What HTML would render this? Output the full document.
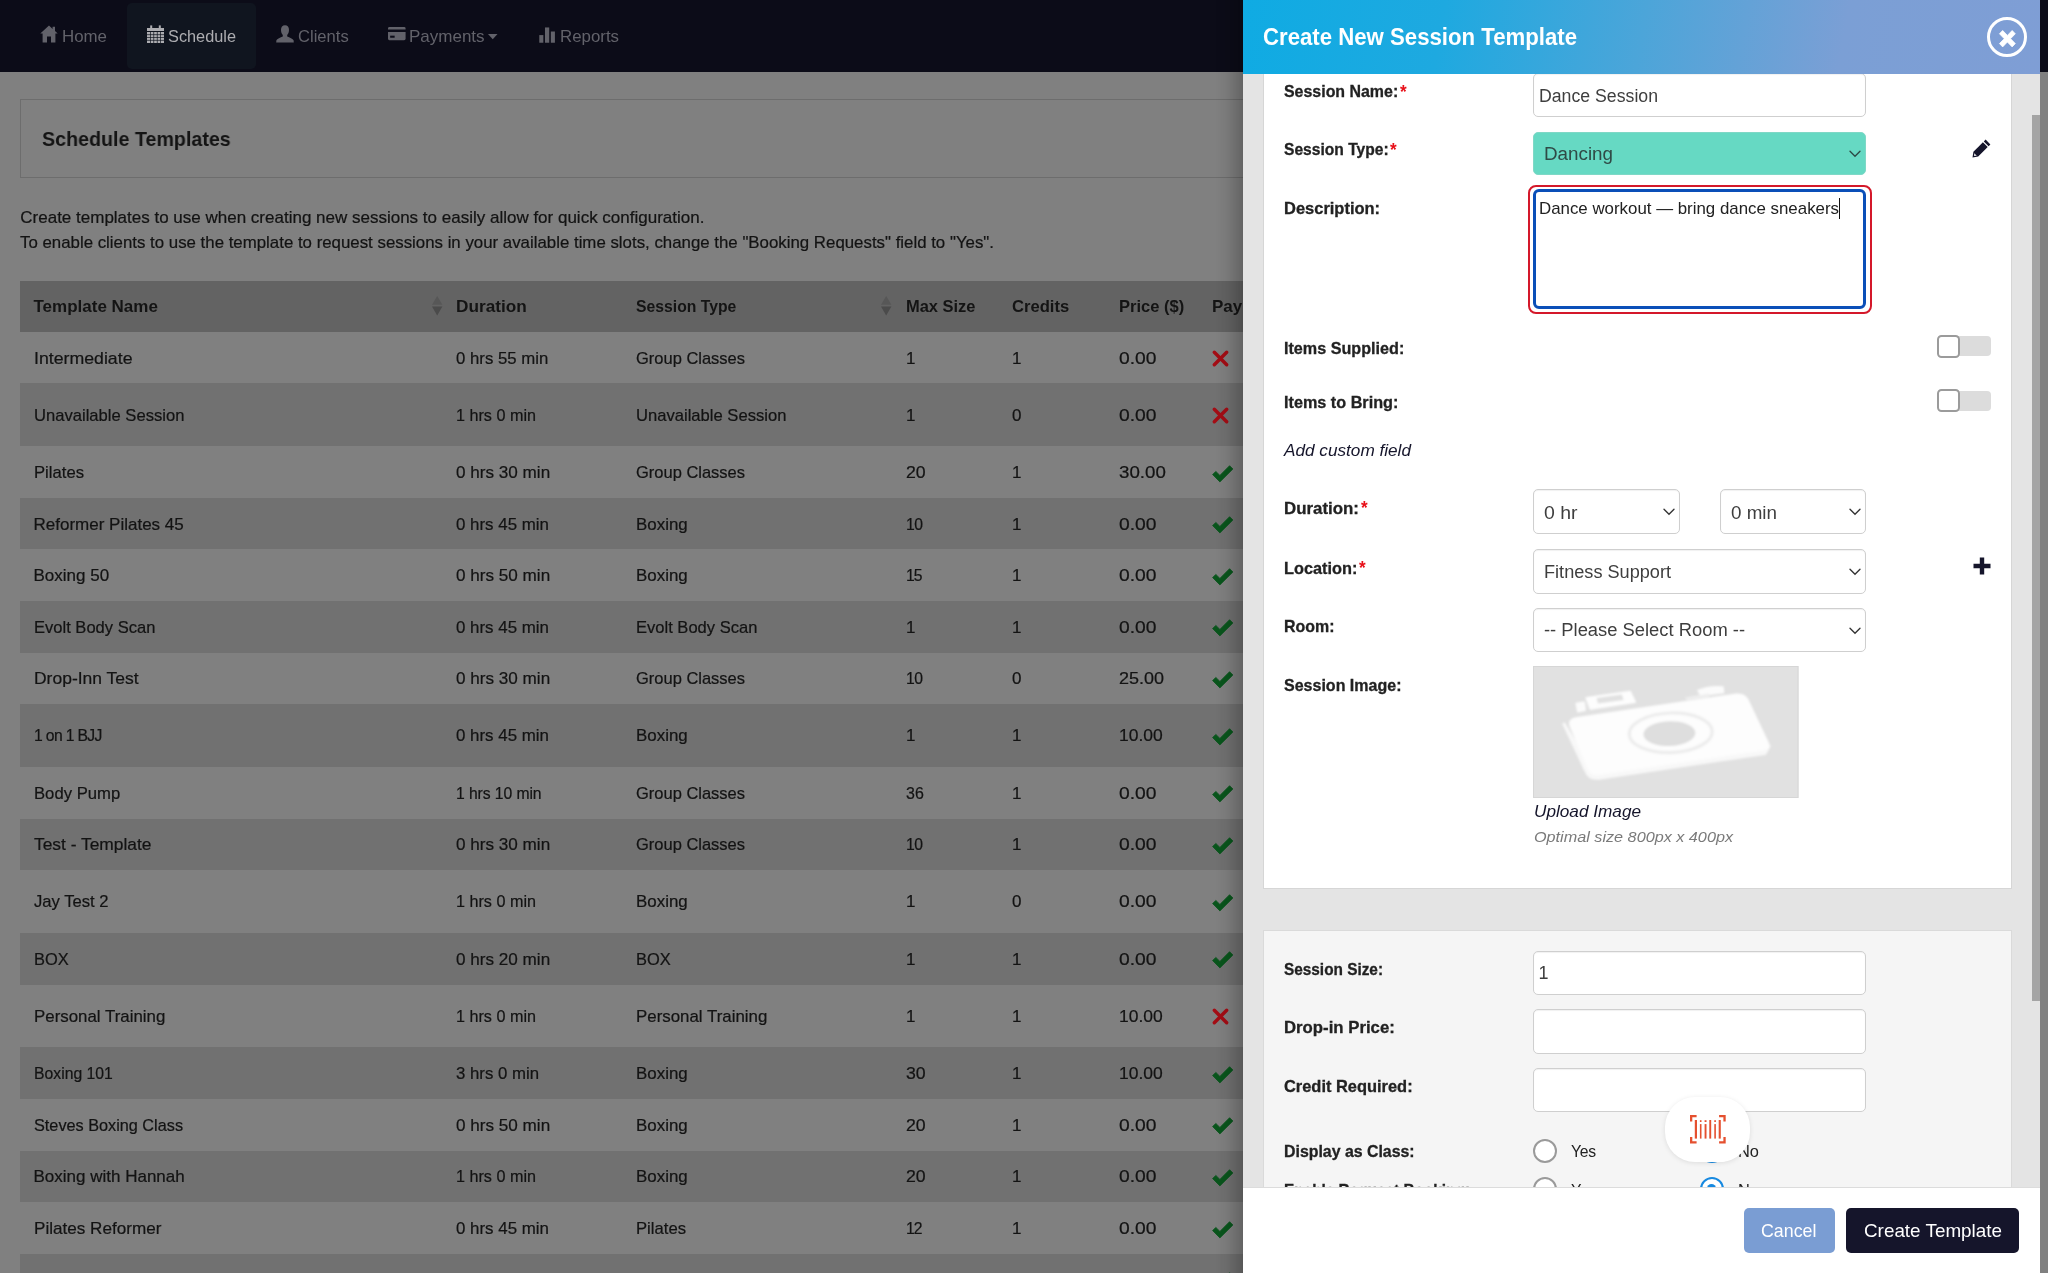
<!DOCTYPE html>
<html lang="en"><head><meta charset="utf-8"><title>Schedule Templates</title>
<style>
html,body{margin:0;padding:0;}
body{width:2048px;height:1273px;overflow:hidden;position:relative;background:#808080;font-family:'Liberation Sans',sans-serif;}
.t{position:absolute;white-space:pre;transform-origin:0 50%;}
svg{display:block;overflow:visible;}
</style></head><body>
<div id="clip" style="position:absolute;left:0;top:0;width:2048px;height:1273px;overflow:hidden;will-change:transform;">
<div style="position:absolute;left:0px;top:0px;width:2048px;height:71.5px;background:#0c0c18;"></div>
<div style="position:absolute;left:127px;top:3px;width:129px;height:65.5px;background:#10151f;border-radius:5px;"></div>
<svg style="position:absolute;left:40px;top:25px;" width="18" height="18" viewBox="0 0 18 18" preserveAspectRatio="none"><path fill="#62626a" d="M9 0.5 L0.3 8.6 L2.6 8.6 L2.6 17.5 L7 17.5 L7 11.5 L11 11.5 L11 17.5 L15.4 17.5 L15.4 8.6 L17.7 8.6 L15 6.1 L15 1.8 L12.6 1.8 L12.6 3.9 Z"/></svg>
<span class="t" style="left:61.5px;top:25.0px;font-size:17px;line-height:24px;color:#62626a;transform:scaleX(0.9921);">Home</span>
<svg style="position:absolute;left:146.5px;top:25px;" width="17" height="18" viewBox="0 0 17 18" preserveAspectRatio="none"><path fill="#adadb1" d="M0 3 H17 V6 H0 Z"/><rect x="3.2" y="0.4" width="2" height="3.4" fill="#adadb1"/><rect x="11.8" y="0.4" width="2" height="3.4" fill="#adadb1"/><rect x="0" y="7" width="17" height="11" fill="#adadb1"/><rect x="3.05" y="7" width="0.7" height="11" fill="#10151f"/><rect x="6.45" y="7" width="0.7" height="11" fill="#10151f"/><rect x="9.85" y="7" width="0.7" height="11" fill="#10151f"/><rect x="13.25" y="7" width="0.7" height="11" fill="#10151f"/><rect x="0" y="9.40" width="17" height="0.7" fill="#10151f"/><rect x="0" y="12.15" width="17" height="0.7" fill="#10151f"/><rect x="0" y="14.90" width="17" height="0.7" fill="#10151f"/></svg>
<span class="t" style="left:168.0px;top:25.0px;font-size:17px;line-height:24px;color:#adadb1;transform:scaleX(0.9592);">Schedule</span>
<svg style="position:absolute;left:276px;top:25px;" width="18" height="18" viewBox="0 0 18 18" preserveAspectRatio="none"><path fill="#62626a" d="M9 0.3 C11.6 0.3 13 2.2 13 5 C13 7.2 12.2 9 11.2 10 L11.2 11.4 C13.5 12.4 17 13.6 17.6 15.2 L17.8 17.6 L0.2 17.6 L0.4 15.2 C1 13.6 4.5 12.4 6.8 11.4 L6.8 10 C5.8 9 5 7.2 5 5 C5 2.2 6.4 0.3 9 0.3 Z"/></svg>
<span class="t" style="left:297.5px;top:25.0px;font-size:17px;line-height:24px;color:#62626a;transform:scaleX(0.9756);">Clients</span>
<svg style="position:absolute;left:388px;top:27.2px;" width="17.6" height="13.2" viewBox="0 0 18 14" preserveAspectRatio="none"><path fill="#62626a" d="M1.5 0 H16.5 Q18 0 18 1.5 V2.6 H0 V1.5 Q0 0 1.5 0 Z M0 5.4 H18 V12.5 Q18 14 16.5 14 H1.5 Q0 14 0 12.5 Z"/><rect x="2.2" y="9.2" width="4.6" height="2.2" fill="#0c0c18"/></svg>
<span class="t" style="left:409.0px;top:25.0px;font-size:17px;line-height:24px;color:#62626a;">Payments</span>
<svg style="position:absolute;left:488px;top:34.3px;" width="9.5" height="5.8" viewBox="0 0 10 6" preserveAspectRatio="none"><path fill="#62626a" d="M0 0 H10 L5 5.5 Z"/></svg>
<svg style="position:absolute;left:539.3px;top:27px;" width="16.4" height="16.2" viewBox="0 0 17 18" preserveAspectRatio="none"><rect x="0.3" y="9" width="4.2" height="8.5" fill="#62626a"/><rect x="6.2" y="0.5" width="4.4" height="17" fill="#62626a"/><rect x="12.3" y="5" width="4.2" height="12.5" fill="#62626a"/></svg>
<span class="t" style="left:559.5px;top:25.0px;font-size:17px;line-height:24px;color:#62626a;transform:scaleX(0.9911);">Reports</span>
<div style="position:absolute;left:20px;top:99px;width:1300px;height:78.8px;border:1px solid #6d6d6d;box-sizing:border-box;"></div>
<span class="t" style="left:42.0px;top:124.3px;font-size:21px;line-height:29px;color:#141414;font-weight:700;transform:scaleX(0.9364);">Schedule Templates</span>
<span class="t" style="left:20.3px;top:205.5px;font-size:17px;line-height:24px;color:#131313;-webkit-text-stroke:0.22px #131313;">Create templates to use when creating new sessions to easily allow for quick configuration.</span>
<span class="t" style="left:20.3px;top:230.6px;font-size:17px;line-height:24px;color:#131313;transform:scaleX(0.9902);-webkit-text-stroke:0.22px #131313;">To enable clients to use the template to request sessions in your available time slots, change the "Booking Requests" field to "Yes".</span>
<div style="position:absolute;left:20px;top:280.9px;width:1300px;height:51px;background:#636363;"></div>
<span class="t" style="left:33.5px;top:295.0px;font-size:17px;line-height:24px;color:#141414;font-weight:700;">Template Name</span>
<span class="t" style="left:456.0px;top:295.0px;font-size:17px;line-height:24px;color:#141414;font-weight:700;transform:scaleX(1.0130);">Duration</span>
<span class="t" style="left:635.5px;top:295.0px;font-size:17px;line-height:24px;color:#141414;font-weight:700;transform:scaleX(0.9258);">Session Type</span>
<span class="t" style="left:906.0px;top:295.0px;font-size:17px;line-height:24px;color:#141414;font-weight:700;transform:scaleX(0.9678);">Max Size</span>
<span class="t" style="left:1012.0px;top:295.0px;font-size:17px;line-height:24px;color:#141414;font-weight:700;transform:scaleX(0.9765);">Credits</span>
<span class="t" style="left:1119.0px;top:295.0px;font-size:17px;line-height:24px;color:#141414;font-weight:700;transform:scaleX(0.9718);">Price ($)</span>
<span class="t" style="left:1212.0px;top:295.0px;font-size:17px;line-height:24px;color:#141414;font-weight:700;">Payment</span>
<svg style="position:absolute;left:431.8px;top:296.2px;" width="10.4" height="19.4" viewBox="0 0 10.4 19.4" preserveAspectRatio="none"><path fill="#575757" d="M5.2 0 L10.4 8.7 H0 Z"/><path fill="#4b4b4b" d="M5.2 19.4 L10.4 10.6 H0 Z"/></svg>
<svg style="position:absolute;left:881.3px;top:296.2px;" width="10.4" height="19.4" viewBox="0 0 10.4 19.4" preserveAspectRatio="none"><path fill="#575757" d="M5.2 0 L10.4 8.7 H0 Z"/><path fill="#4b4b4b" d="M5.2 19.4 L10.4 10.6 H0 Z"/></svg>
<span class="t" style="left:33.5px;top:346.6px;font-size:17px;line-height:24px;color:#131313;transform:scaleX(1.0423);-webkit-text-stroke:0.22px #131313;">Intermediate</span>
<span class="t" style="left:456.0px;top:346.6px;font-size:17px;line-height:24px;color:#131313;transform:scaleX(0.9867);-webkit-text-stroke:0.22px #131313;">0 hrs 55 min</span>
<span class="t" style="left:635.5px;top:346.6px;font-size:17px;line-height:24px;color:#131313;transform:scaleX(0.9694);-webkit-text-stroke:0.22px #131313;">Group Classes</span>
<span class="t" style="left:906.0px;top:346.6px;font-size:17px;line-height:24px;color:#131313;-webkit-text-stroke:0.22px #131313;">1</span>
<span class="t" style="left:1012.0px;top:346.6px;font-size:17px;line-height:24px;color:#131313;-webkit-text-stroke:0.22px #131313;">1</span>
<span class="t" style="left:1119.0px;top:346.6px;font-size:17px;line-height:24px;color:#131313;transform:scaleX(1.1331);-webkit-text-stroke:0.22px #131313;">0.00</span>
<svg style="position:absolute;left:1212px;top:349.5px;" width="17" height="17" viewBox="0 0 17 17" preserveAspectRatio="none"><path d="M2.3 2.3 L14.7 14.7 M14.7 2.3 L2.3 14.7" fill="none" stroke="#a30d15" stroke-width="3.5" stroke-linecap="round"/></svg>
<div style="position:absolute;left:20px;top:383.4px;width:1300px;height:62.9px;background:#717171;"></div>
<span class="t" style="left:33.5px;top:403.8px;font-size:17px;line-height:24px;color:#131313;transform:scaleX(0.9763);-webkit-text-stroke:0.22px #131313;">Unavailable Session</span>
<span class="t" style="left:456.0px;top:403.8px;font-size:17px;line-height:24px;color:#131313;transform:scaleX(0.9513);-webkit-text-stroke:0.22px #131313;">1 hrs 0 min</span>
<span class="t" style="left:635.5px;top:403.8px;font-size:17px;line-height:24px;color:#131313;transform:scaleX(0.9763);-webkit-text-stroke:0.22px #131313;">Unavailable Session</span>
<span class="t" style="left:906.0px;top:403.8px;font-size:17px;line-height:24px;color:#131313;-webkit-text-stroke:0.22px #131313;">1</span>
<span class="t" style="left:1012.0px;top:403.8px;font-size:17px;line-height:24px;color:#131313;-webkit-text-stroke:0.22px #131313;">0</span>
<span class="t" style="left:1119.0px;top:403.8px;font-size:17px;line-height:24px;color:#131313;transform:scaleX(1.1331);-webkit-text-stroke:0.22px #131313;">0.00</span>
<svg style="position:absolute;left:1212px;top:406.7px;" width="17" height="17" viewBox="0 0 17 17" preserveAspectRatio="none"><path d="M2.3 2.3 L14.7 14.7 M14.7 2.3 L2.3 14.7" fill="none" stroke="#a30d15" stroke-width="3.5" stroke-linecap="round"/></svg>
<span class="t" style="left:33.5px;top:461.0px;font-size:17px;line-height:24px;color:#131313;transform:scaleX(0.9798);-webkit-text-stroke:0.22px #131313;">Pilates</span>
<span class="t" style="left:456.0px;top:461.0px;font-size:17px;line-height:24px;color:#131313;transform:scaleX(1.0070);-webkit-text-stroke:0.22px #131313;">0 hrs 30 min</span>
<span class="t" style="left:635.5px;top:461.0px;font-size:17px;line-height:24px;color:#131313;transform:scaleX(0.9694);-webkit-text-stroke:0.22px #131313;">Group Classes</span>
<span class="t" style="left:906.0px;top:461.0px;font-size:17px;line-height:24px;color:#131313;transform:scaleX(1.0411);-webkit-text-stroke:0.22px #131313;">20</span>
<span class="t" style="left:1012.0px;top:461.0px;font-size:17px;line-height:24px;color:#131313;-webkit-text-stroke:0.22px #131313;">1</span>
<span class="t" style="left:1119.0px;top:461.0px;font-size:17px;line-height:24px;color:#131313;transform:scaleX(1.1000);-webkit-text-stroke:0.22px #131313;">30.00</span>
<svg style="position:absolute;left:1211.6px;top:464.7px;" width="21.5" height="17.5" viewBox="0 0 21.5 17.5" preserveAspectRatio="none"><path fill="#09551c" stroke="#09551c" stroke-width="0.8" stroke-linejoin="round" d="M0.6 9.6 L3.8 6.4 L7.9 10.4 L17.6 0.7 L20.9 4.0 L7.9 16.9 Z"/></svg>
<div style="position:absolute;left:20px;top:497.9px;width:1300px;height:51.5px;background:#717171;"></div>
<span class="t" style="left:33.5px;top:512.6px;font-size:17px;line-height:24px;color:#131313;-webkit-text-stroke:0.22px #131313;">Reformer Pilates 45</span>
<span class="t" style="left:456.0px;top:512.6px;font-size:17px;line-height:24px;color:#131313;transform:scaleX(0.9942);-webkit-text-stroke:0.22px #131313;">0 hrs 45 min</span>
<span class="t" style="left:635.5px;top:512.6px;font-size:17px;line-height:24px;color:#131313;transform:scaleX(0.9945);-webkit-text-stroke:0.22px #131313;">Boxing</span>
<span class="t" style="left:906.0px;top:512.6px;font-size:17px;line-height:24px;color:#131313;letter-spacing:-0.49px;transform:scaleX(0.9250);-webkit-text-stroke:0.22px #131313;">10</span>
<span class="t" style="left:1012.0px;top:512.6px;font-size:17px;line-height:24px;color:#131313;-webkit-text-stroke:0.22px #131313;">1</span>
<span class="t" style="left:1119.0px;top:512.6px;font-size:17px;line-height:24px;color:#131313;transform:scaleX(1.1331);-webkit-text-stroke:0.22px #131313;">0.00</span>
<svg style="position:absolute;left:1211.6px;top:516.3px;" width="21.5" height="17.5" viewBox="0 0 21.5 17.5" preserveAspectRatio="none"><path fill="#09551c" stroke="#09551c" stroke-width="0.8" stroke-linejoin="round" d="M0.6 9.6 L3.8 6.4 L7.9 10.4 L17.6 0.7 L20.9 4.0 L7.9 16.9 Z"/></svg>
<span class="t" style="left:33.5px;top:564.1px;font-size:17px;line-height:24px;color:#131313;-webkit-text-stroke:0.22px #131313;">Boxing 50</span>
<span class="t" style="left:456.0px;top:564.1px;font-size:17px;line-height:24px;color:#131313;transform:scaleX(1.0070);-webkit-text-stroke:0.22px #131313;">0 hrs 50 min</span>
<span class="t" style="left:635.5px;top:564.1px;font-size:17px;line-height:24px;color:#131313;transform:scaleX(0.9945);-webkit-text-stroke:0.22px #131313;">Boxing</span>
<span class="t" style="left:906.0px;top:564.1px;font-size:17px;line-height:24px;color:#131313;letter-spacing:-1.20px;transform:scaleX(0.9250);-webkit-text-stroke:0.22px #131313;">15</span>
<span class="t" style="left:1012.0px;top:564.1px;font-size:17px;line-height:24px;color:#131313;-webkit-text-stroke:0.22px #131313;">1</span>
<span class="t" style="left:1119.0px;top:564.1px;font-size:17px;line-height:24px;color:#131313;transform:scaleX(1.1331);-webkit-text-stroke:0.22px #131313;">0.00</span>
<svg style="position:absolute;left:1211.6px;top:567.8px;" width="21.5" height="17.5" viewBox="0 0 21.5 17.5" preserveAspectRatio="none"><path fill="#09551c" stroke="#09551c" stroke-width="0.8" stroke-linejoin="round" d="M0.6 9.6 L3.8 6.4 L7.9 10.4 L17.6 0.7 L20.9 4.0 L7.9 16.9 Z"/></svg>
<div style="position:absolute;left:20px;top:601.0px;width:1300px;height:51.5px;background:#717171;"></div>
<span class="t" style="left:33.5px;top:615.7px;font-size:17px;line-height:24px;color:#131313;transform:scaleX(0.9731);-webkit-text-stroke:0.22px #131313;">Evolt Body Scan</span>
<span class="t" style="left:456.0px;top:615.7px;font-size:17px;line-height:24px;color:#131313;transform:scaleX(0.9942);-webkit-text-stroke:0.22px #131313;">0 hrs 45 min</span>
<span class="t" style="left:635.5px;top:615.7px;font-size:17px;line-height:24px;color:#131313;transform:scaleX(0.9731);-webkit-text-stroke:0.22px #131313;">Evolt Body Scan</span>
<span class="t" style="left:906.0px;top:615.7px;font-size:17px;line-height:24px;color:#131313;-webkit-text-stroke:0.22px #131313;">1</span>
<span class="t" style="left:1012.0px;top:615.7px;font-size:17px;line-height:24px;color:#131313;-webkit-text-stroke:0.22px #131313;">1</span>
<span class="t" style="left:1119.0px;top:615.7px;font-size:17px;line-height:24px;color:#131313;transform:scaleX(1.1331);-webkit-text-stroke:0.22px #131313;">0.00</span>
<svg style="position:absolute;left:1211.6px;top:619.4px;" width="21.5" height="17.5" viewBox="0 0 21.5 17.5" preserveAspectRatio="none"><path fill="#09551c" stroke="#09551c" stroke-width="0.8" stroke-linejoin="round" d="M0.6 9.6 L3.8 6.4 L7.9 10.4 L17.6 0.7 L20.9 4.0 L7.9 16.9 Z"/></svg>
<span class="t" style="left:33.5px;top:667.2px;font-size:17px;line-height:24px;color:#131313;transform:scaleX(1.0282);-webkit-text-stroke:0.22px #131313;">Drop-Inn Test</span>
<span class="t" style="left:456.0px;top:667.2px;font-size:17px;line-height:24px;color:#131313;transform:scaleX(1.0070);-webkit-text-stroke:0.22px #131313;">0 hrs 30 min</span>
<span class="t" style="left:635.5px;top:667.2px;font-size:17px;line-height:24px;color:#131313;transform:scaleX(0.9694);-webkit-text-stroke:0.22px #131313;">Group Classes</span>
<span class="t" style="left:906.0px;top:667.2px;font-size:17px;line-height:24px;color:#131313;letter-spacing:-0.49px;transform:scaleX(0.9250);-webkit-text-stroke:0.22px #131313;">10</span>
<span class="t" style="left:1012.0px;top:667.2px;font-size:17px;line-height:24px;color:#131313;-webkit-text-stroke:0.22px #131313;">0</span>
<span class="t" style="left:1119.0px;top:667.2px;font-size:17px;line-height:24px;color:#131313;transform:scaleX(1.0577);-webkit-text-stroke:0.22px #131313;">25.00</span>
<svg style="position:absolute;left:1211.6px;top:670.9px;" width="21.5" height="17.5" viewBox="0 0 21.5 17.5" preserveAspectRatio="none"><path fill="#09551c" stroke="#09551c" stroke-width="0.8" stroke-linejoin="round" d="M0.6 9.6 L3.8 6.4 L7.9 10.4 L17.6 0.7 L20.9 4.0 L7.9 16.9 Z"/></svg>
<div style="position:absolute;left:20px;top:704.1px;width:1300px;height:62.9px;background:#717171;"></div>
<span class="t" style="left:33.5px;top:724.4px;font-size:17px;line-height:24px;color:#131313;letter-spacing:-0.71px;transform:scaleX(0.9250);-webkit-text-stroke:0.22px #131313;">1 on 1 BJJ</span>
<span class="t" style="left:456.0px;top:724.4px;font-size:17px;line-height:24px;color:#131313;transform:scaleX(0.9942);-webkit-text-stroke:0.22px #131313;">0 hrs 45 min</span>
<span class="t" style="left:635.5px;top:724.4px;font-size:17px;line-height:24px;color:#131313;transform:scaleX(0.9945);-webkit-text-stroke:0.22px #131313;">Boxing</span>
<span class="t" style="left:906.0px;top:724.4px;font-size:17px;line-height:24px;color:#131313;-webkit-text-stroke:0.22px #131313;">1</span>
<span class="t" style="left:1012.0px;top:724.4px;font-size:17px;line-height:24px;color:#131313;-webkit-text-stroke:0.22px #131313;">1</span>
<span class="t" style="left:1119.0px;top:724.4px;font-size:17px;line-height:24px;color:#131313;transform:scaleX(1.0271);-webkit-text-stroke:0.22px #131313;">10.00</span>
<svg style="position:absolute;left:1211.6px;top:728.1px;" width="21.5" height="17.5" viewBox="0 0 21.5 17.5" preserveAspectRatio="none"><path fill="#09551c" stroke="#09551c" stroke-width="0.8" stroke-linejoin="round" d="M0.6 9.6 L3.8 6.4 L7.9 10.4 L17.6 0.7 L20.9 4.0 L7.9 16.9 Z"/></svg>
<span class="t" style="left:33.5px;top:781.7px;font-size:17px;line-height:24px;color:#131313;transform:scaleX(0.9808);-webkit-text-stroke:0.22px #131313;">Body Pump</span>
<span class="t" style="left:456.0px;top:781.7px;font-size:17px;line-height:24px;color:#131313;letter-spacing:-0.09px;transform:scaleX(0.9250);-webkit-text-stroke:0.22px #131313;">1 hrs 10 min</span>
<span class="t" style="left:635.5px;top:781.7px;font-size:17px;line-height:24px;color:#131313;transform:scaleX(0.9694);-webkit-text-stroke:0.22px #131313;">Group Classes</span>
<span class="t" style="left:906.0px;top:781.7px;font-size:17px;line-height:24px;color:#131313;transform:scaleX(0.9407);-webkit-text-stroke:0.22px #131313;">36</span>
<span class="t" style="left:1012.0px;top:781.7px;font-size:17px;line-height:24px;color:#131313;-webkit-text-stroke:0.22px #131313;">1</span>
<span class="t" style="left:1119.0px;top:781.7px;font-size:17px;line-height:24px;color:#131313;transform:scaleX(1.1331);-webkit-text-stroke:0.22px #131313;">0.00</span>
<svg style="position:absolute;left:1211.6px;top:785.4px;" width="21.5" height="17.5" viewBox="0 0 21.5 17.5" preserveAspectRatio="none"><path fill="#09551c" stroke="#09551c" stroke-width="0.8" stroke-linejoin="round" d="M0.6 9.6 L3.8 6.4 L7.9 10.4 L17.6 0.7 L20.9 4.0 L7.9 16.9 Z"/></svg>
<div style="position:absolute;left:20px;top:818.5px;width:1300px;height:51.5px;background:#717171;"></div>
<span class="t" style="left:33.5px;top:833.2px;font-size:17px;line-height:24px;color:#131313;transform:scaleX(1.0220);-webkit-text-stroke:0.22px #131313;">Test - Template</span>
<span class="t" style="left:456.0px;top:833.2px;font-size:17px;line-height:24px;color:#131313;transform:scaleX(1.0070);-webkit-text-stroke:0.22px #131313;">0 hrs 30 min</span>
<span class="t" style="left:635.5px;top:833.2px;font-size:17px;line-height:24px;color:#131313;transform:scaleX(0.9694);-webkit-text-stroke:0.22px #131313;">Group Classes</span>
<span class="t" style="left:906.0px;top:833.2px;font-size:17px;line-height:24px;color:#131313;letter-spacing:-0.49px;transform:scaleX(0.9250);-webkit-text-stroke:0.22px #131313;">10</span>
<span class="t" style="left:1012.0px;top:833.2px;font-size:17px;line-height:24px;color:#131313;-webkit-text-stroke:0.22px #131313;">1</span>
<span class="t" style="left:1119.0px;top:833.2px;font-size:17px;line-height:24px;color:#131313;transform:scaleX(1.1331);-webkit-text-stroke:0.22px #131313;">0.00</span>
<svg style="position:absolute;left:1211.6px;top:836.9px;" width="21.5" height="17.5" viewBox="0 0 21.5 17.5" preserveAspectRatio="none"><path fill="#09551c" stroke="#09551c" stroke-width="0.8" stroke-linejoin="round" d="M0.6 9.6 L3.8 6.4 L7.9 10.4 L17.6 0.7 L20.9 4.0 L7.9 16.9 Z"/></svg>
<span class="t" style="left:33.5px;top:890.4px;font-size:17px;line-height:24px;color:#131313;transform:scaleX(0.9772);-webkit-text-stroke:0.22px #131313;">Jay Test 2</span>
<span class="t" style="left:456.0px;top:890.4px;font-size:17px;line-height:24px;color:#131313;transform:scaleX(0.9513);-webkit-text-stroke:0.22px #131313;">1 hrs 0 min</span>
<span class="t" style="left:635.5px;top:890.4px;font-size:17px;line-height:24px;color:#131313;transform:scaleX(0.9945);-webkit-text-stroke:0.22px #131313;">Boxing</span>
<span class="t" style="left:906.0px;top:890.4px;font-size:17px;line-height:24px;color:#131313;-webkit-text-stroke:0.22px #131313;">1</span>
<span class="t" style="left:1012.0px;top:890.4px;font-size:17px;line-height:24px;color:#131313;-webkit-text-stroke:0.22px #131313;">0</span>
<span class="t" style="left:1119.0px;top:890.4px;font-size:17px;line-height:24px;color:#131313;transform:scaleX(1.1331);-webkit-text-stroke:0.22px #131313;">0.00</span>
<svg style="position:absolute;left:1211.6px;top:894.1px;" width="21.5" height="17.5" viewBox="0 0 21.5 17.5" preserveAspectRatio="none"><path fill="#09551c" stroke="#09551c" stroke-width="0.8" stroke-linejoin="round" d="M0.6 9.6 L3.8 6.4 L7.9 10.4 L17.6 0.7 L20.9 4.0 L7.9 16.9 Z"/></svg>
<div style="position:absolute;left:20px;top:933.0px;width:1300px;height:51.5px;background:#717171;"></div>
<span class="t" style="left:33.5px;top:947.7px;font-size:17px;line-height:24px;color:#131313;transform:scaleX(0.9664);-webkit-text-stroke:0.22px #131313;">BOX</span>
<span class="t" style="left:456.0px;top:947.7px;font-size:17px;line-height:24px;color:#131313;transform:scaleX(1.0070);-webkit-text-stroke:0.22px #131313;">0 hrs 20 min</span>
<span class="t" style="left:635.5px;top:947.7px;font-size:17px;line-height:24px;color:#131313;transform:scaleX(0.9664);-webkit-text-stroke:0.22px #131313;">BOX</span>
<span class="t" style="left:906.0px;top:947.7px;font-size:17px;line-height:24px;color:#131313;-webkit-text-stroke:0.22px #131313;">1</span>
<span class="t" style="left:1012.0px;top:947.7px;font-size:17px;line-height:24px;color:#131313;-webkit-text-stroke:0.22px #131313;">1</span>
<span class="t" style="left:1119.0px;top:947.7px;font-size:17px;line-height:24px;color:#131313;transform:scaleX(1.1331);-webkit-text-stroke:0.22px #131313;">0.00</span>
<svg style="position:absolute;left:1211.6px;top:951.4px;" width="21.5" height="17.5" viewBox="0 0 21.5 17.5" preserveAspectRatio="none"><path fill="#09551c" stroke="#09551c" stroke-width="0.8" stroke-linejoin="round" d="M0.6 9.6 L3.8 6.4 L7.9 10.4 L17.6 0.7 L20.9 4.0 L7.9 16.9 Z"/></svg>
<span class="t" style="left:33.5px;top:1004.9px;font-size:17px;line-height:24px;color:#131313;transform:scaleX(0.9923);-webkit-text-stroke:0.22px #131313;">Personal Training</span>
<span class="t" style="left:456.0px;top:1004.9px;font-size:17px;line-height:24px;color:#131313;transform:scaleX(0.9513);-webkit-text-stroke:0.22px #131313;">1 hrs 0 min</span>
<span class="t" style="left:635.5px;top:1004.9px;font-size:17px;line-height:24px;color:#131313;transform:scaleX(0.9923);-webkit-text-stroke:0.22px #131313;">Personal Training</span>
<span class="t" style="left:906.0px;top:1004.9px;font-size:17px;line-height:24px;color:#131313;-webkit-text-stroke:0.22px #131313;">1</span>
<span class="t" style="left:1012.0px;top:1004.9px;font-size:17px;line-height:24px;color:#131313;-webkit-text-stroke:0.22px #131313;">1</span>
<span class="t" style="left:1119.0px;top:1004.9px;font-size:17px;line-height:24px;color:#131313;transform:scaleX(1.0271);-webkit-text-stroke:0.22px #131313;">10.00</span>
<svg style="position:absolute;left:1212px;top:1007.8px;" width="17" height="17" viewBox="0 0 17 17" preserveAspectRatio="none"><path d="M2.3 2.3 L14.7 14.7 M14.7 2.3 L2.3 14.7" fill="none" stroke="#a30d15" stroke-width="3.5" stroke-linecap="round"/></svg>
<div style="position:absolute;left:20px;top:1047.4px;width:1300px;height:51.5px;background:#717171;"></div>
<span class="t" style="left:33.5px;top:1062.1px;font-size:17px;line-height:24px;color:#131313;transform:scaleX(0.9262);-webkit-text-stroke:0.22px #131313;">Boxing 101</span>
<span class="t" style="left:456.0px;top:1062.1px;font-size:17px;line-height:24px;color:#131313;transform:scaleX(0.9870);-webkit-text-stroke:0.22px #131313;">3 hrs 0 min</span>
<span class="t" style="left:635.5px;top:1062.1px;font-size:17px;line-height:24px;color:#131313;transform:scaleX(0.9945);-webkit-text-stroke:0.22px #131313;">Boxing</span>
<span class="t" style="left:906.0px;top:1062.1px;font-size:17px;line-height:24px;color:#131313;transform:scaleX(1.0411);-webkit-text-stroke:0.22px #131313;">30</span>
<span class="t" style="left:1012.0px;top:1062.1px;font-size:17px;line-height:24px;color:#131313;-webkit-text-stroke:0.22px #131313;">1</span>
<span class="t" style="left:1119.0px;top:1062.1px;font-size:17px;line-height:24px;color:#131313;transform:scaleX(1.0271);-webkit-text-stroke:0.22px #131313;">10.00</span>
<svg style="position:absolute;left:1211.6px;top:1065.8px;" width="21.5" height="17.5" viewBox="0 0 21.5 17.5" preserveAspectRatio="none"><path fill="#09551c" stroke="#09551c" stroke-width="0.8" stroke-linejoin="round" d="M0.6 9.6 L3.8 6.4 L7.9 10.4 L17.6 0.7 L20.9 4.0 L7.9 16.9 Z"/></svg>
<span class="t" style="left:33.5px;top:1113.7px;font-size:17px;line-height:24px;color:#131313;transform:scaleX(0.9557);-webkit-text-stroke:0.22px #131313;">Steves Boxing Class</span>
<span class="t" style="left:456.0px;top:1113.7px;font-size:17px;line-height:24px;color:#131313;transform:scaleX(1.0070);-webkit-text-stroke:0.22px #131313;">0 hrs 50 min</span>
<span class="t" style="left:635.5px;top:1113.7px;font-size:17px;line-height:24px;color:#131313;transform:scaleX(0.9945);-webkit-text-stroke:0.22px #131313;">Boxing</span>
<span class="t" style="left:906.0px;top:1113.7px;font-size:17px;line-height:24px;color:#131313;transform:scaleX(1.0411);-webkit-text-stroke:0.22px #131313;">20</span>
<span class="t" style="left:1012.0px;top:1113.7px;font-size:17px;line-height:24px;color:#131313;-webkit-text-stroke:0.22px #131313;">1</span>
<span class="t" style="left:1119.0px;top:1113.7px;font-size:17px;line-height:24px;color:#131313;transform:scaleX(1.1331);-webkit-text-stroke:0.22px #131313;">0.00</span>
<svg style="position:absolute;left:1211.6px;top:1117.4px;" width="21.5" height="17.5" viewBox="0 0 21.5 17.5" preserveAspectRatio="none"><path fill="#09551c" stroke="#09551c" stroke-width="0.8" stroke-linejoin="round" d="M0.6 9.6 L3.8 6.4 L7.9 10.4 L17.6 0.7 L20.9 4.0 L7.9 16.9 Z"/></svg>
<div style="position:absolute;left:20px;top:1150.5px;width:1300px;height:51.5px;background:#717171;"></div>
<span class="t" style="left:33.5px;top:1165.2px;font-size:17px;line-height:24px;color:#131313;-webkit-text-stroke:0.22px #131313;">Boxing with Hannah</span>
<span class="t" style="left:456.0px;top:1165.2px;font-size:17px;line-height:24px;color:#131313;transform:scaleX(0.9513);-webkit-text-stroke:0.22px #131313;">1 hrs 0 min</span>
<span class="t" style="left:635.5px;top:1165.2px;font-size:17px;line-height:24px;color:#131313;transform:scaleX(0.9945);-webkit-text-stroke:0.22px #131313;">Boxing</span>
<span class="t" style="left:906.0px;top:1165.2px;font-size:17px;line-height:24px;color:#131313;transform:scaleX(1.0411);-webkit-text-stroke:0.22px #131313;">20</span>
<span class="t" style="left:1012.0px;top:1165.2px;font-size:17px;line-height:24px;color:#131313;-webkit-text-stroke:0.22px #131313;">1</span>
<span class="t" style="left:1119.0px;top:1165.2px;font-size:17px;line-height:24px;color:#131313;transform:scaleX(1.1331);-webkit-text-stroke:0.22px #131313;">0.00</span>
<svg style="position:absolute;left:1211.6px;top:1168.9px;" width="21.5" height="17.5" viewBox="0 0 21.5 17.5" preserveAspectRatio="none"><path fill="#09551c" stroke="#09551c" stroke-width="0.8" stroke-linejoin="round" d="M0.6 9.6 L3.8 6.4 L7.9 10.4 L17.6 0.7 L20.9 4.0 L7.9 16.9 Z"/></svg>
<span class="t" style="left:33.5px;top:1216.8px;font-size:17px;line-height:24px;color:#131313;transform:scaleX(1.0062);-webkit-text-stroke:0.22px #131313;">Pilates Reformer</span>
<span class="t" style="left:456.0px;top:1216.8px;font-size:17px;line-height:24px;color:#131313;transform:scaleX(0.9942);-webkit-text-stroke:0.22px #131313;">0 hrs 45 min</span>
<span class="t" style="left:635.5px;top:1216.8px;font-size:17px;line-height:24px;color:#131313;transform:scaleX(0.9798);-webkit-text-stroke:0.22px #131313;">Pilates</span>
<span class="t" style="left:906.0px;top:1216.8px;font-size:17px;line-height:24px;color:#131313;letter-spacing:-1.20px;transform:scaleX(0.9250);-webkit-text-stroke:0.22px #131313;">12</span>
<span class="t" style="left:1012.0px;top:1216.8px;font-size:17px;line-height:24px;color:#131313;-webkit-text-stroke:0.22px #131313;">1</span>
<span class="t" style="left:1119.0px;top:1216.8px;font-size:17px;line-height:24px;color:#131313;transform:scaleX(1.1331);-webkit-text-stroke:0.22px #131313;">0.00</span>
<svg style="position:absolute;left:1211.6px;top:1220.5px;" width="21.5" height="17.5" viewBox="0 0 21.5 17.5" preserveAspectRatio="none"><path fill="#09551c" stroke="#09551c" stroke-width="0.8" stroke-linejoin="round" d="M0.6 9.6 L3.8 6.4 L7.9 10.4 L17.6 0.7 L20.9 4.0 L7.9 16.9 Z"/></svg>
<div style="position:absolute;left:20px;top:1253.6px;width:1300px;height:51.5px;background:#717171;"></div>
<span class="t" style="left:33.5px;top:1268.3px;font-size:17px;line-height:24px;color:#131313;transform:scaleX(0.9900);-webkit-text-stroke:0.22px #131313;">Yoga with Hannah</span>
<span class="t" style="left:456.0px;top:1268.3px;font-size:17px;line-height:24px;color:#131313;transform:scaleX(0.9513);-webkit-text-stroke:0.22px #131313;">1 hrs 0 min</span>
<span class="t" style="left:635.5px;top:1268.3px;font-size:17px;line-height:24px;color:#131313;transform:scaleX(0.9959);-webkit-text-stroke:0.22px #131313;">Yoga</span>
<span class="t" style="left:906.0px;top:1268.3px;font-size:17px;line-height:24px;color:#131313;letter-spacing:-0.49px;transform:scaleX(0.9250);-webkit-text-stroke:0.22px #131313;">10</span>
<span class="t" style="left:1012.0px;top:1268.3px;font-size:17px;line-height:24px;color:#131313;-webkit-text-stroke:0.22px #131313;">1</span>
<span class="t" style="left:1119.0px;top:1268.3px;font-size:17px;line-height:24px;color:#131313;transform:scaleX(1.1331);-webkit-text-stroke:0.22px #131313;">0.00</span>
<svg style="position:absolute;left:1211.6px;top:1272.0px;" width="21.5" height="17.5" viewBox="0 0 21.5 17.5" preserveAspectRatio="none"><path fill="#09551c" stroke="#09551c" stroke-width="0.8" stroke-linejoin="round" d="M0.6 9.6 L3.8 6.4 L7.9 10.4 L17.6 0.7 L20.9 4.0 L7.9 16.9 Z"/></svg>
<div style="position:absolute;left:1216px;top:0px;width:27px;height:1273px;background:linear-gradient(to right, rgba(0,0,0,0) 0%, rgba(0,0,0,0.05) 40%, rgba(0,0,0,0.22) 100%);"></div>
<div style="position:absolute;left:1242.5px;top:0px;width:797.5px;height:1273px;background:#e4e4e4;"></div>
<div style="position:absolute;left:2032px;top:115px;width:8px;height:886px;background:#a4a4a4;"></div>
<div style="position:absolute;left:1263px;top:60px;width:748.5px;height:828.5px;background:#fff;border:1px solid #d6d6d6;box-sizing:border-box;"></div>
<div style="position:absolute;left:1263px;top:929.6px;width:748.5px;height:300px;background:#f5f5f5;border:1px solid #dadada;box-sizing:border-box;"></div>
<div style="position:absolute;left:1533.3px;top:72.5px;width:333px;height:44.5px;background:#fff;border:1px solid #cfcfcf;border-radius:5px;box-sizing:border-box;box-shadow:inset 0 1px 1px rgba(0,0,0,0.06);"></div>
<span class="t" style="left:1538.5px;top:83.5px;font-size:18px;line-height:25px;color:#3e3e3e;transform:scaleX(0.9828);">Dance Session</span>
<span class="t" style="left:1284.4px;top:79.9px;font-size:16.6px;line-height:23px;color:#222;font-weight:700;transform:scaleX(0.9599);-webkit-text-stroke:0.3px #222;">Session Name:</span>
<span class="t" style="left:1399.5px;top:79.5px;font-size:18px;line-height:25px;color:#e8111a;font-weight:700;transform:scaleX(0.9500);">*</span>
<div style="position:absolute;left:1533.3px;top:131.5px;width:333px;height:43px;background:#66d9c3;border:1px solid #7fd8c6;border-radius:5px;box-sizing:border-box;"></div>
<span class="t" style="left:1543.5px;top:141.5px;font-size:18px;line-height:25px;color:#2f4a46;transform:scaleX(1.0447);">Dancing</span>
<svg style="position:absolute;left:1849px;top:150px;" width="12" height="8" viewBox="0 0 12 8" preserveAspectRatio="none"><path d="M1 1.2 L6 6.3 L11 1.2" fill="none" stroke="#2d4a45" stroke-width="1.35" stroke-linecap="round" stroke-linejoin="miter"/></svg>
<span class="t" style="left:1284.4px;top:138.4px;font-size:16.6px;line-height:23px;color:#222;font-weight:700;transform:scaleX(0.9400);-webkit-text-stroke:0.3px #222;">Session Type:</span>
<span class="t" style="left:1390.0px;top:138.0px;font-size:18px;line-height:25px;color:#e8111a;font-weight:700;transform:scaleX(0.9500);">*</span>
<svg style="position:absolute;left:1972px;top:139px;" width="19" height="19" viewBox="0 0 19 19" preserveAspectRatio="none"><path fill="#15152b" d="M13.6 0.6 L18.4 5.4 L16.6 7.2 L11.8 2.4 Z M10.9 3.3 L15.7 8.1 L6.2 17.6 L0.5 18.5 L1.4 12.8 Z"/><path fill="#fff" d="M2.3 14.2 L4.8 16.7 L2.0 17.1 Z" opacity="0.9"/></svg>
<div style="position:absolute;left:1528px;top:184.7px;width:343.5px;height:129px;border:2.3px solid #d4182a;border-radius:8px;box-sizing:border-box;"></div>
<div style="position:absolute;left:1533.3px;top:189.3px;width:333px;height:119.5px;background:#fff;border:3px solid #0a4fb8;border-radius:6px;box-sizing:border-box;"></div>
<span class="t" style="left:1538.5px;top:196.5px;font-size:17px;line-height:24px;color:#222;transform:scaleX(0.9921);">Dance workout — bring dance sneakers</span>
<div style="position:absolute;left:1838.8px;top:197.5px;width:1.2px;height:21px;background:#111;"></div>
<span class="t" style="left:1284.4px;top:197.1px;font-size:16.6px;line-height:23px;color:#222;font-weight:700;transform:scaleX(0.9926);-webkit-text-stroke:0.3px #222;">Description:</span>
<div style="position:absolute;left:1948px;top:335.90000000000003px;width:43px;height:20.6px;background:#dcdcdc;border-radius:4px;"></div><div style="position:absolute;left:1936.8px;top:334.6px;width:23px;height:23px;background:#fff;border:2px solid #9b9b9b;border-radius:4.5px;box-sizing:border-box;"></div>
<div style="position:absolute;left:1948px;top:390.5px;width:43px;height:20.6px;background:#dcdcdc;border-radius:4px;"></div><div style="position:absolute;left:1936.8px;top:389.2px;width:23px;height:23px;background:#fff;border:2px solid #9b9b9b;border-radius:4.5px;box-sizing:border-box;"></div>
<span class="t" style="left:1284.4px;top:336.9px;font-size:16.6px;line-height:23px;color:#222;font-weight:700;transform:scaleX(0.9737);-webkit-text-stroke:0.3px #222;">Items Supplied:</span>
<span class="t" style="left:1284.4px;top:391.3px;font-size:16.6px;line-height:23px;color:#222;font-weight:700;transform:scaleX(0.9770);-webkit-text-stroke:0.3px #222;">Items to Bring:</span>
<span class="t" style="left:1284.4px;top:439.2px;font-size:17px;line-height:24px;color:#15152b;font-style:italic;transform:scaleX(1.0104);">Add custom field</span>
<span class="t" style="left:1284.4px;top:496.6px;font-size:16.6px;line-height:23px;color:#222;font-weight:700;transform:scaleX(1.0169);-webkit-text-stroke:0.3px #222;">Duration:</span>
<span class="t" style="left:1360.5px;top:496.0px;font-size:18px;line-height:25px;color:#e8111a;font-weight:700;transform:scaleX(0.9500);">*</span>
<div style="position:absolute;left:1533.3px;top:489.2px;width:146.5px;height:44.6px;background:#fff;border:1px solid #cfcfcf;border-radius:5px;box-sizing:border-box;box-shadow:inset 0 1px 1px rgba(0,0,0,0.06);"></div>
<span class="t" style="left:1543.8px;top:500.5px;font-size:18px;line-height:25px;color:#3e3e3e;transform:scaleX(1.0796);">0 hr</span>
<svg style="position:absolute;left:1662.5px;top:508px;" width="12" height="8" viewBox="0 0 12 8" preserveAspectRatio="none"><path d="M1 1.2 L6 6.3 L11 1.2" fill="none" stroke="#333" stroke-width="1.35" stroke-linecap="round" stroke-linejoin="miter"/></svg>
<div style="position:absolute;left:1720px;top:489.2px;width:146.3px;height:44.6px;background:#fff;border:1px solid #cfcfcf;border-radius:5px;box-sizing:border-box;box-shadow:inset 0 1px 1px rgba(0,0,0,0.06);"></div>
<span class="t" style="left:1730.5px;top:500.5px;font-size:18px;line-height:25px;color:#3e3e3e;transform:scaleX(1.0451);">0 min</span>
<svg style="position:absolute;left:1849px;top:508px;" width="12" height="8" viewBox="0 0 12 8" preserveAspectRatio="none"><path d="M1 1.2 L6 6.3 L11 1.2" fill="none" stroke="#333" stroke-width="1.35" stroke-linecap="round" stroke-linejoin="miter"/></svg>
<span class="t" style="left:1284.4px;top:556.6px;font-size:16.6px;line-height:23px;color:#222;font-weight:700;transform:scaleX(0.9830);-webkit-text-stroke:0.3px #222;">Location:</span>
<span class="t" style="left:1358.5px;top:556.0px;font-size:18px;line-height:25px;color:#e8111a;font-weight:700;transform:scaleX(0.9500);">*</span>
<div style="position:absolute;left:1533.3px;top:549.1px;width:333px;height:44.6px;background:#fff;border:1px solid #cfcfcf;border-radius:5px;box-sizing:border-box;box-shadow:inset 0 1px 1px rgba(0,0,0,0.06);"></div>
<span class="t" style="left:1543.8px;top:559.9px;font-size:18px;line-height:25px;color:#3e3e3e;transform:scaleX(1.0074);">Fitness Support</span>
<svg style="position:absolute;left:1849px;top:568px;" width="12" height="8" viewBox="0 0 12 8" preserveAspectRatio="none"><path d="M1 1.2 L6 6.3 L11 1.2" fill="none" stroke="#333" stroke-width="1.35" stroke-linecap="round" stroke-linejoin="miter"/></svg>
<svg style="position:absolute;left:1973px;top:557px;" width="18" height="18" viewBox="0 0 18 18" preserveAspectRatio="none"><path fill="#15152b" d="M6.8 0.5 H11.2 V6.8 H17.5 V11.2 H11.2 V17.5 H6.8 V11.2 H0.5 V6.8 H6.8 Z"/></svg>
<span class="t" style="left:1284.4px;top:614.7px;font-size:16.6px;line-height:23px;color:#222;font-weight:700;transform:scaleX(0.9610);-webkit-text-stroke:0.3px #222;">Room:</span>
<div style="position:absolute;left:1533.3px;top:607.8px;width:333px;height:44.4px;background:#fff;border:1px solid #cfcfcf;border-radius:5px;box-sizing:border-box;box-shadow:inset 0 1px 1px rgba(0,0,0,0.06);"></div>
<span class="t" style="left:1543.8px;top:618.1px;font-size:18px;line-height:25px;color:#3e3e3e;transform:scaleX(1.0200);">-- Please Select Room --</span>
<svg style="position:absolute;left:1849px;top:626.5px;" width="12" height="8" viewBox="0 0 12 8" preserveAspectRatio="none"><path d="M1 1.2 L6 6.3 L11 1.2" fill="none" stroke="#333" stroke-width="1.35" stroke-linecap="round" stroke-linejoin="miter"/></svg>
<span class="t" style="left:1284.4px;top:673.6px;font-size:16.6px;line-height:23px;color:#222;font-weight:700;transform:scaleX(0.9652);-webkit-text-stroke:0.3px #222;">Session Image:</span>
<svg style="position:absolute;left:1533.3px;top:666px" width="265.5" height="132" viewBox="0 0 265.5 132"><rect width="265.5" height="132" fill="#e1e1e1"/><rect x="0.5" y="0.5" width="264.5" height="131" fill="none" stroke="#d6d6d6"/><defs><filter id="bl" x="-5%" y="-5%" width="110%" height="110%"><feGaussianBlur stdDeviation="1.0"/></filter></defs>
<g filter="url(#bl)">
<path d="M31 58 L52.5 104 Q56 113.5 66 112.2 L232 87.5 L236 80 L60 106 Z" fill="#f8f8f8" stroke="#f8f8f8" stroke-width="3" stroke-linejoin="round"/>
<path d="M44 51 L203 27.5 Q212 26.5 215.5 33.5 L236 77 Q238 83.5 230 84.6 L66 109 Q57.5 110 54.5 103 L36.5 60 Q34 52.5 44 51 Z" fill="#fdfdfd"/>
<path d="M53.5 32 L97 25.8 L102 36 L57.5 42.8 Z" fill="#fdfdfd" stroke="#fdfdfd" stroke-width="2" stroke-linejoin="round"/>
<path d="M63.5 32 L88.8 28.6 L90.6 34 L65 37.6 Z" fill="#e1e1e1"/>
<path d="M43.5 37.5 L51 36.5 L52 44 L45 45.5 Z" fill="#fbfbfb" stroke="#fbfbfb" stroke-width="2" stroke-linejoin="round"/>
<path d="M165 24.5 Q176 19.5 190 21 L190.5 26.5 L168 29.5 Z" fill="#fbfbfb" stroke="#fbfbfb" stroke-width="1.5" stroke-linejoin="round"/>
<path d="M152 31.5 L176 27.5 L176 31 L154 34 Z" fill="#efefef"/>
<ellipse cx="137.7" cy="66.8" rx="41.5" ry="19.8" fill="none" stroke="#ededed" stroke-width="3.2" transform="rotate(-2 137.7 66.8)"/>
<ellipse cx="136.4" cy="67.6" rx="26" ry="12.4" fill="#dedede" transform="rotate(-2 136.4 67.6)"/>
</g></svg>
<span class="t" style="left:1533.5px;top:800.2px;font-size:17px;line-height:24px;color:#15152b;font-style:italic;transform:scaleX(1.0109);">Upload Image</span>
<span class="t" style="left:1533.5px;top:825.5px;font-size:15px;line-height:21px;color:#7a7a7a;font-style:italic;transform:scaleX(1.0800);">Optimal size 800px x 400px</span>
<span class="t" style="left:1284.4px;top:957.7px;font-size:16.6px;line-height:23px;color:#222;font-weight:700;transform:scaleX(0.9254);-webkit-text-stroke:0.3px #222;">Session Size:</span>
<div style="position:absolute;left:1533.3px;top:950.6px;width:333px;height:44.6px;background:#fff;border:1px solid #cfcfcf;border-radius:5px;box-sizing:border-box;box-shadow:inset 0 1px 1px rgba(0,0,0,0.06);"></div>
<span class="t" style="left:1538.5px;top:960.5px;font-size:18px;line-height:25px;color:#3e3e3e;">1</span>
<span class="t" style="left:1284.4px;top:1016.2px;font-size:16.6px;line-height:23px;color:#222;font-weight:700;transform:scaleX(1.0099);-webkit-text-stroke:0.3px #222;">Drop-in Price:</span>
<div style="position:absolute;left:1533.3px;top:1009px;width:333px;height:44.6px;background:#fff;border:1px solid #cfcfcf;border-radius:5px;box-sizing:border-box;box-shadow:inset 0 1px 1px rgba(0,0,0,0.06);"></div>
<span class="t" style="left:1284.4px;top:1074.7px;font-size:16.6px;line-height:23px;color:#222;font-weight:700;transform:scaleX(0.9892);-webkit-text-stroke:0.3px #222;">Credit Required:</span>
<div style="position:absolute;left:1533.3px;top:1067.5px;width:333px;height:44.6px;background:#fff;border:1px solid #cfcfcf;border-radius:5px;box-sizing:border-box;box-shadow:inset 0 1px 1px rgba(0,0,0,0.06);"></div>
<span class="t" style="left:1284.4px;top:1139.7px;font-size:16.6px;line-height:23px;color:#222;font-weight:700;transform:scaleX(0.9567);-webkit-text-stroke:0.3px #222;">Display as Class:</span>
<div style="position:absolute;left:1533.2px;top:1139.2px;width:24px;height:24px;border:2.4px solid #9a9a9a;border-radius:50%;box-sizing:border-box;background:#fff;"></div>
<span class="t" style="left:1571.0px;top:1140.0px;font-size:17px;line-height:24px;color:#222;letter-spacing:-0.24px;transform:scaleX(0.9250);">Yes</span>
<div style="position:absolute;left:1700px;top:1139.2px;width:24px;height:24px;border:2.4px solid #1789e0;border-radius:50%;box-sizing:border-box;background:#fff;"><div style="position:absolute;left:5.2px;top:5.2px;width:9px;height:9px;background:#1789e0;border-radius:50%;"></div></div>
<span class="t" style="left:1738.0px;top:1140.0px;font-size:17px;line-height:24px;color:#222;transform:scaleX(0.9662);">No</span>
<span class="t" style="left:1284.4px;top:1178.9px;font-size:16.6px;line-height:23px;color:#222;font-weight:700;transform:scaleX(0.9254);-webkit-text-stroke:0.3px #222;">Enable Request Booking:</span>
<div style="position:absolute;left:1533.2px;top:1176.8px;width:24px;height:24px;border:2.4px solid #9a9a9a;border-radius:50%;box-sizing:border-box;background:#fff;"></div>
<span class="t" style="left:1571.0px;top:1179.2px;font-size:17px;line-height:24px;color:#222;letter-spacing:-0.24px;transform:scaleX(0.9250);">Yes</span>
<div style="position:absolute;left:1700px;top:1176.8px;width:24px;height:24px;border:2.4px solid #1789e0;border-radius:50%;box-sizing:border-box;background:#fff;"><div style="position:absolute;left:5.2px;top:5.2px;width:9px;height:9px;background:#1789e0;border-radius:50%;"></div></div>
<span class="t" style="left:1738.0px;top:1179.2px;font-size:17px;line-height:24px;color:#222;transform:scaleX(0.9662);">No</span>
<div style="position:absolute;left:1665px;top:1096.6px;width:85px;height:65.6px;background:#fff;border-radius:30px;box-shadow:0 1px 5px rgba(0,0,0,0.10);"></div>
<svg style="position:absolute;left:1690px;top:1115.1px;" width="35.7" height="28.6" viewBox="0 0 35.7 28.6" preserveAspectRatio="none"><path d="M6.6 1.15 H1.15 V6.6 M29.1 1.15 H34.55 V6.6 M6.6 27.45 H1.15 V22 M29.1 27.45 H34.55 V22" fill="none" stroke="#e5502f" stroke-width="2.3"/><rect x="4.8" y="5" width="2.2" height="18.6" fill="#e5502f"/><rect x="9.9" y="9.1" width="1.6" height="14.5" fill="#e5502f"/><rect x="9.9" y="5.2" width="1.6" height="1.8" fill="#e5502f"/><rect x="14.6" y="9.1" width="1.9" height="14.5" fill="#e5502f"/><rect x="14.6" y="5.2" width="1.9" height="1.8" fill="#e5502f"/><rect x="19.3" y="5" width="1.9" height="18.6" fill="#e5502f"/><rect x="24.3" y="9.1" width="1.6" height="14.5" fill="#e5502f"/><rect x="24.3" y="5.2" width="1.6" height="1.8" fill="#e5502f"/><rect x="28.7" y="5" width="2.1" height="18.6" fill="#e5502f"/></svg>
<div style="position:absolute;left:1242.5px;top:0px;width:797.5px;height:73.5px;background:linear-gradient(100deg,#0fabe3 0%,#1ea9e0 25%,#4ca5d9 50%,#7b9fd5 75%,#7f9ed5 100%);"></div>
<span class="t" style="left:1262.7px;top:21.3px;font-size:23.5px;line-height:33px;color:#fff;font-weight:700;transform:scaleX(0.9441);">Create New Session Template</span>
<div style="position:absolute;left:1987px;top:16.8px;width:40px;height:40px;border:3.2px solid #fff;border-radius:50%;box-sizing:border-box;"></div>
<svg style="position:absolute;left:1998.6px;top:29.9px;" width="16.8" height="17.4" viewBox="0 0 17 17" preserveAspectRatio="none"><path fill="#fff" stroke="#fff" stroke-width="0.8" stroke-linejoin="round" d="M3.7 0.5 L8.5 5.3 L13.3 0.5 L16.5 3.7 L11.7 8.5 L16.5 13.3 L13.3 16.5 L8.5 11.7 L3.7 16.5 L0.5 13.3 L5.3 8.5 L0.5 3.7 Z"/></svg>
<div style="position:absolute;left:1242.5px;top:1187px;width:797.5px;height:86px;background:#fff;border-top:1px solid #dcdcdc;box-sizing:border-box;"></div>
<div style="position:absolute;left:1743.8px;top:1208px;width:91px;height:45px;background:#7a9dd3;border-radius:5px;"></div>
<span class="t" style="left:1761.0px;top:1217.0px;font-size:19px;line-height:27px;color:#fff;transform:scaleX(0.9365);">Cancel</span>
<div style="position:absolute;left:1846px;top:1208px;width:173px;height:45px;background:#15152b;border-radius:5px;"></div>
<span class="t" style="left:1863.5px;top:1217.0px;font-size:19px;line-height:27px;color:#fff;transform:scaleX(0.9924);">Create Template</span>
</div>
</body></html>
